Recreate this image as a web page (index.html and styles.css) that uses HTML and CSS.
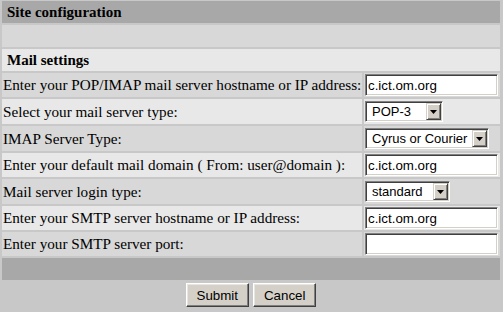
FILE: index.html
```html
<!DOCTYPE html>
<html lang="en">
<head>
  <meta charset="UTF-8">
  <title>Site configuration</title>
  <link rel="stylesheet" href="styles.css">
</head>
<body>
  <form class="config">
    <div class="head">Site configuration</div>
    <div class="blank"></div>
    <div class="sub">Mail settings</div>

    <div class="label dark">Enter your POP/IMAP mail server hostname or IP address:</div>
    <div class="field dark"><input class="text" type="text" value="c.ict.om.org"></div>

    <div class="label light tall">Select your mail server type:</div>
    <div class="field light tall">
      <span class="combo">
        <select class="pick w-pop"><option>POP-3</option><option>IMAP</option></select>
        <span class="arrow"><svg width="7" height="4" viewBox="0 0 7 4"><polygon points="0,0 7,0 3.5,4" fill="#000"/></svg></span>
      </span>
    </div>

    <div class="label dark tall">IMAP Server Type:</div>
    <div class="field dark tall">
      <span class="combo">
        <select class="pick w-cyrus"><option>Cyrus or Courier</option><option>UW</option></select>
        <span class="arrow"><svg width="7" height="4" viewBox="0 0 7 4"><polygon points="0,0 7,0 3.5,4" fill="#000"/></svg></span>
      </span>
    </div>

    <div class="label light">Enter your default mail domain ( From: user@domain ):</div>
    <div class="field light"><input class="text" type="text" value="c.ict.om.org"></div>

    <div class="label dark tall">Mail server login type:</div>
    <div class="field dark tall">
      <span class="combo">
        <select class="pick w-std"><option>standard</option><option>vmailmgr</option></select>
        <span class="arrow"><svg width="7" height="4" viewBox="0 0 7 4"><polygon points="0,0 7,0 3.5,4" fill="#000"/></svg></span>
      </span>
    </div>

    <div class="label light">Enter your SMTP server hostname or IP address:</div>
    <div class="field light"><input class="text" type="text" value="c.ict.om.org"></div>

    <div class="label dark">Enter your SMTP server port:</div>
    <div class="field dark"><input class="text" type="text" value=""></div>

    <div class="foot"></div>
    <div class="actions">
      <button type="button" class="btn">Submit</button>
      <button type="button" class="btn">Cancel</button>
    </div>
  </form>
</body>
</html>
```

FILE: styles.css
```css
body {
  margin: 0;
  background-color: #c8c8c8;
  font-family: "Liberation Serif", "Times New Roman", serif;
  font-size: 15.2px;
  color: #000;
}

.config {
  display: grid;
  grid-template-columns: 360px 136px;
  gap: 2px;
  padding: 1px 3px 0 2px;
  width: 498px;
}

/* full width bars */
.head, .blank, .sub, .foot, .actions {
  grid-column: 1 / -1;
}
.head, .blank, .sub, .foot {
  height: 22px;
  display: flex;
  align-items: center;
  padding-left: 5px;
  font-weight: bold;
  font-size: 15px;
}
.head, .foot { background-color: #a8a8a8; }
.blank { background-color: #d8d8d8; }
.sub { background-color: #e8e8e8; }

.dark { background-color: #d8d8d8; }
.light { background-color: #e8e8e8; }

.label {
  height: 24px;
  display: flex;
  align-items: center;
  padding-left: 1px;
  white-space: nowrap;
}
.field {
  height: 24px;
  display: flex;
  align-items: center;
  padding-left: 1px;
}
.tall { height: 25px; }

/* sunken text box */
.text {
  box-sizing: border-box;
  width: 133px;
  height: 22px;
  margin: 0;
  padding: 0 2px;
  font-family: "Liberation Sans", Arial, sans-serif;
  font-size: 13.33px;
  color: #000;
  background-color: #fff;
  border: 1px solid;
  border-color: #808080 #fff #fff #808080;
  box-shadow: inset 1px 1px #404040, inset -1px -1px #d4d0c8;
  outline: none;
}

/* drop down */
.combo {
  position: relative;
  display: inline-block;
  height: 21px;
}
.pick {
  appearance: none;
  -webkit-appearance: none;
  box-sizing: border-box;
  height: 21px;
  margin: 0;
  padding: 0 14px 0 6px;
  font-family: "Liberation Sans", Arial, sans-serif;
  font-size: 13px;
  color: #000;
  background-color: #fff;
  border: 1px solid;
  border-color: #808080 #fff #fff #808080;
  box-shadow: inset 1px 1px #404040, inset -1px -1px #d4d0c8;
  border-radius: 0;
  outline: none;
}
.w-pop { width: 78px; }
.w-cyrus { width: 124px; }
.w-std { width: 85px; }

.arrow {
  position: absolute;
  top: 2px;
  right: 2px;
  box-sizing: border-box;
  width: 15px;
  height: 17px;
  display: flex;
  align-items: center;
  justify-content: center;
  background-color: #d4d0c8;
  border: 1px solid;
  border-color: #d4d0c8 #404040 #404040 #d4d0c8;
  box-shadow: inset 1px 1px #fff, inset -1px -1px #808080;
}

.actions {
  display: flex;
  justify-content: center;
  gap: 4px;
  padding-top: 1px;
}
.btn {
  box-sizing: border-box;
  height: 24px;
  padding: 0 10px;
  font-family: "Liberation Sans", Arial, sans-serif;
  font-size: 13.33px;
  color: #000;
  background-color: #d4d0c8;
  border: 1px solid;
  border-color: #fff #404040 #404040 #fff;
  box-shadow: inset -1px -1px #808080, inset 1px 1px #e8e6e0;
  border-radius: 0;
}
```
